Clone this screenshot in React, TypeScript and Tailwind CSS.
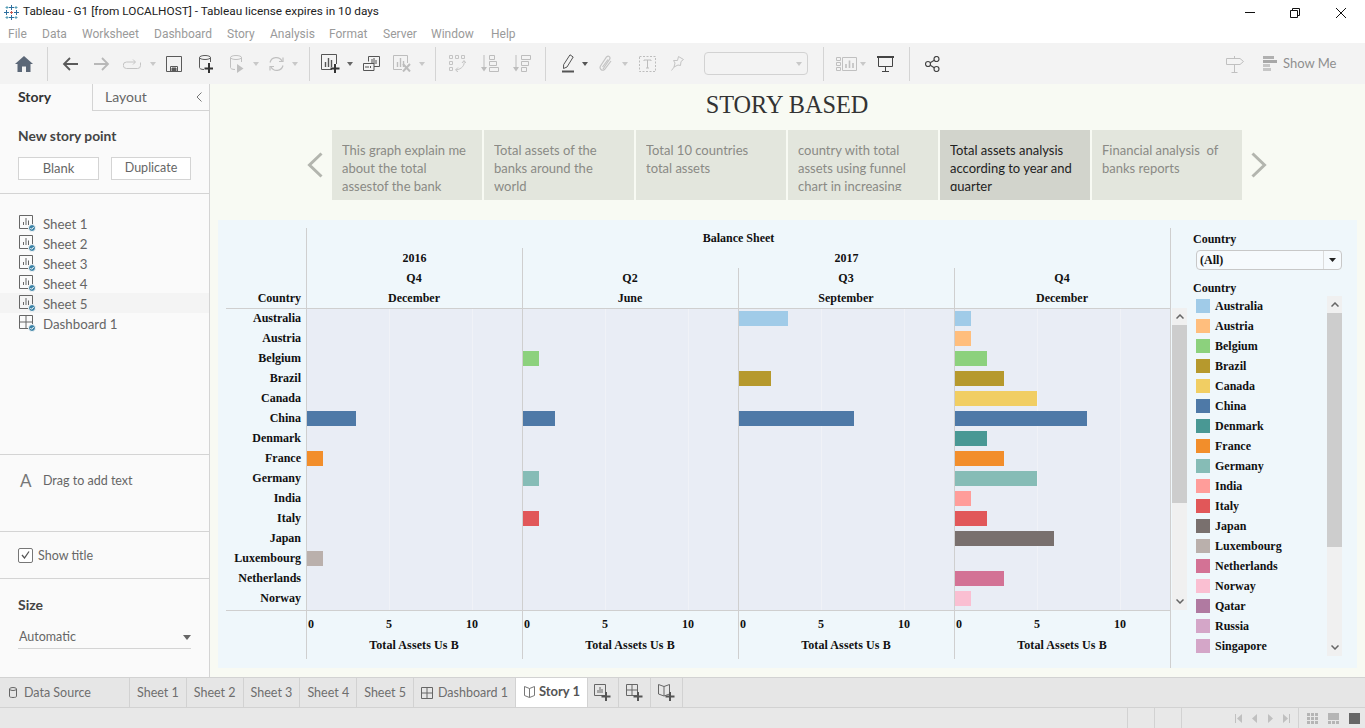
import React from "react";

const COLORS: Record<string, string> = {
  Australia: "#a0cbe8", Austria: "#ffbe7d", Belgium: "#8cd17d", Brazil: "#b6992d", Canada: "#f1ce63",
  China: "#4e79a7", Denmark: "#499894", France: "#f28e2b", Germany: "#86bcb6", India: "#ff9d9a",
  Italy: "#e15759", Japan: "#79706e", Luxembourg: "#bab0ac", Netherlands: "#d37295", Norway: "#fabfd2",
  Qatar: "#b07aa1", Russia: "#d4a6c8", Singapore: "#d4a6c8",
};
const ROWS = ["Australia","Austria","Belgium","Brazil","Canada","China","Denmark","France","Germany","India","Italy","Japan","Luxembourg","Netherlands","Norway"];
const LEGEND = [...ROWS, "Qatar", "Russia", "Singapore"];
const W: Record<number, number> = { 1: 16, 2: 32, 3: 49, 5: 82, 6: 99, 7: 115, 8: 132 };
const PANELS: Record<string, number>[] = [
  { China: 3, France: 1, Luxembourg: 1 },
  { Belgium: 1, China: 2, Germany: 1, Italy: 1 },
  { Australia: 3, Brazil: 2, China: 7 },
  { Australia: 1, Austria: 1, Belgium: 2, Brazil: 3, Canada: 5, China: 8, Denmark: 2, France: 3, Germany: 5, India: 1, Italy: 2, Japan: 6, Netherlands: 3, Norway: 1 },
];
const CARDS = [
  ["This graph explain me", "about the total", "assestof the bank"],
  ["Total assets of the", "banks around the", "world"],
  ["Total 10 countries", "total assets"],
  ["country with total", "assets using funnel", "chart in increasing"],
  ["Total assets analysis", "according to year and", "quarter"],
  ["Financial analysis  of", "banks reports"],
];

const Caret = ({ c, fill = "#a8a8a8" }: { c: string; fill?: string }) => (
  <svg className={c} width="6" height="4" viewBox="0 0 6 4"><path d="M0 0H6L3 4Z" fill={fill} /></svg>
);
const Sep = ({ c }: { c: string }) => <div className={`h-[34px] w-px shrink-0 bg-[#d4d4d4] ${c}`} />;

const Toolbar = () => (
  <div className="flex h-[41px] shrink-0 items-center bg-[#f3f3f3]">
    <svg className="ml-[15px] shrink-0" width="18" height="16" viewBox="0 0 18 16"><path d="M9 0L18 8H15.5V16H11V10.5H7V16H2.5V8H0Z" fill="#5b6777" /></svg>
    <Sep c="ml-[14px]" />
    <svg className="ml-[14px] shrink-0" width="16" height="14" viewBox="0 0 16 14" fill="none" stroke="#5a5a5a" strokeWidth="1.8"><path d="M16 7H2M8 1L2 7L8 13" /></svg>
    <svg className="ml-[16px] shrink-0" width="16" height="14" viewBox="0 0 16 14" fill="none" stroke="#b8b8b8" strokeWidth="1.8"><path d="M0 7H14M8 1L14 7L8 13" /></svg>
    <svg className="ml-[13px] shrink-0" width="18" height="10" viewBox="0 0 18 10" fill="none" stroke="#c4c4c4" strokeWidth="1"><path d="M12 3H3.5a3 3 0 0 0 0 6.5H14.5a3 3 0 0 0 3-3V3.5M10 .5L12.5 3L10 5.5" /></svg>
    <Caret c="ml-[9px] shrink-0" fill="#c8c8c8" />
    <svg className="ml-[10px] shrink-0" width="16" height="16" viewBox="0 0 16 16" fill="none" stroke="#5a5a5a"><path d="M.5.5H15.5V15.5H.5Z" /><path d="M4.5 15V10.5H11.5V15" /><path d="M6 12H10V15H6Z" fill="#5a5a5a" /></svg>
    <svg className="ml-[17px] shrink-0" width="14" height="18" viewBox="0 0 14 18" fill="none" stroke="#5a5a5a"><ellipse cx="6" cy="2.5" rx="5.5" ry="2" /><path d="M.5 2.5V12.5C.5 13.5 2 14.5 5 14.5M11.5 2.5V7" /><path d="M10 8V18M5.5 13.5H14.5" stroke="#333" strokeWidth="2" /></svg>
    <svg className="ml-[17px] shrink-0" width="14" height="18" viewBox="0 0 14 18" fill="none" stroke="#c0c0c0"><ellipse cx="6" cy="2.5" rx="5.5" ry="2" /><path d="M.5 2.5V12.5C.5 13.5 2 14.5 5 14.5M11.5 2.5V7" /><path d="M7 9L13.5 13.5L7 18Z" fill="#c0c0c0" stroke="none" /></svg>
    <Caret c="ml-[9px] shrink-0" fill="#c8c8c8" />
    <svg className="ml-[9px] shrink-0" width="17" height="16" viewBox="0 0 17 16" fill="none" stroke="#c0c0c0" strokeWidth="1.2"><path d="M2 6.5A6.5 6.5 0 0 1 14 5M15 9.5A6.5 6.5 0 0 1 3 11" /><path d="M11 5.5H15V1.5M6 10.5H2V14.5" /></svg>
    <Caret c="ml-[7px] shrink-0" fill="#c8c8c8" />
    <Sep c="ml-[11px]" />
    <svg className="ml-[11px] shrink-0" width="19" height="19" viewBox="0 0 19 19" fill="none" stroke="#555"><path d="M11 15.5H.5V.5H15.5V10" /><path d="M4.5 13V8M7.5 13V4M10.5 13V6" strokeWidth="1.4" /><path d="M14 10V19M9.5 14.5H18.5" stroke="#333" strokeWidth="2" /></svg>
    <Caret c="ml-[7px] shrink-0" fill="#666" />
    <svg className="ml-[10px] shrink-0" width="17" height="15" viewBox="0 0 17 15" fill="none" stroke="#555"><path d="M5.5 5.5V.5H16.5V10.5H11" /><path d="M.5 7.5H11V14.5H.5Z" fill="#f3f3f3" /><path d="M9 8V3M11 8V2M13 8V4M3 12V10M5 12V10M7.5 12V10" /></svg>
    <svg className="ml-[13px] shrink-0" width="18" height="17" viewBox="0 0 18 17" fill="none" stroke="#bdbdbd"><path d="M9 14.5H.5V.5H14.5V8" /><path d="M4.5 12V7M7.5 12V3M10.5 12V6" strokeWidth="1.4" /><path d="M10 9L17 16.5M17 9L10 16.5" strokeWidth="2" /></svg>
    <Caret c="ml-[8px] shrink-0" fill="#c8c8c8" />
    <Sep c="ml-[10px]" />
    <svg className="ml-[13px] shrink-0" width="17" height="17" viewBox="0 0 17 17" fill="none" stroke="#c4c4c4"><path d="M.5.5H3.5V3.5H.5ZM6.5.5H9.5V3.5H6.5ZM12.5.5H15.5V3.5H12.5ZM.5 6.5H3.5V9.5H.5ZM.5 12.5H3.5V15.5H.5Z" /><path d="M15 6C16 10 13 14 7 15M9 12.5L6.5 15L9 17M13 8L15 5.500L17 8" /></svg>
    <svg className="ml-[15px] shrink-0" width="18" height="17" viewBox="0 0 18 17" fill="none" stroke="#bdbdbd"><path d="M3 0V14" /><path d="M0 12H6L3 16.500Z" fill="#bdbdbd" stroke="none" /><path d="M8.500.5H13.500V4.500H8.500ZM8.500 6.500H15.500V10.500H8.500ZM8.500 12.500H17.500V16.500H8.500Z" /></svg>
    <svg className="ml-[14px] shrink-0" width="18" height="17" viewBox="0 0 18 17" fill="none" stroke="#bdbdbd"><path d="M3 0V14" /><path d="M0 12H6L3 16.500Z" fill="#bdbdbd" stroke="none" /><path d="M8.500.5H17.500V4.500H8.500ZM8.500 6.500H15.500V10.500H8.500ZM8.500 12.500H13.500V16.500H8.500Z" /></svg>
    <Sep c="ml-[14px]" />
    <svg className="ml-[16px] shrink-0" width="12" height="19" viewBox="0 0 12 19" fill="none" stroke="#555"><path d="M8 .8L11.200 3L5 13L1.500 14.500L1.600 10.700Z" /><path d="M0 17.500H12" strokeWidth="2" /></svg>
    <Caret c="ml-[8px] shrink-0" fill="#555" />
    <svg className="ml-[11px] shrink-0" width="13" height="17" viewBox="0 0 13 17" fill="none" stroke="#c4c4c4" strokeWidth="1.200"><path d="M4 14L10.500 4.500C12 2 9.500 .2 7.500 2L1.500 11C0 13.500 3 16.500 5.500 14.500L12 6M3.500 12L9 4.500" /></svg>
    <Caret c="ml-[10px] shrink-0" fill="#c8c8c8" />
    <svg className="ml-[11px] shrink-0" width="17" height="16" viewBox="0 0 17 16" fill="none" stroke="#bdbdbd"><path d="M.5.5H16.500V15.500H.5Z" strokeDasharray="2 1.500" /><path d="M5 5V4H12V5M8.500 4V12M7 12H10" /></svg>
    <svg className="ml-[15px] shrink-0" width="13" height="15" viewBox="0 0 13 15" fill="none" stroke="#c4c4c4"><path d="M7.500.5L12.500 3.500L10 5.500L9.500 9.500L7 9L3 11L4 7L2.500 4.500L6.500 4.500ZM3.500 10.500L.5 14.500" /></svg>
    <div className="ml-[20px] flex h-[23px] w-[104px] shrink-0 items-center justify-end rounded-sm border border-[#d2d2d2] bg-[#f3f3f3] pr-[5px]">
      <Caret c="" fill="#c8c8c8" />
    </div>
    <Sep c="ml-[15px]" />
    <svg className="ml-[12px] shrink-0" width="21" height="14" viewBox="0 0 21 14" fill="none" stroke="#c0c0c0"><path d="M.5.5H4.500V3.500H.5ZM.5 5.500H4.500V8.500H.5ZM.5 10.500H4.500V13.500H.5ZM6.500.5H20.500V13.500H6.500Z" /><path d="M10 11V7M13.500 11V3.500M17 11V6" strokeWidth="1.600" /></svg>
    <Caret c="ml-[3px] shrink-0" fill="#c8c8c8" />
    <svg className="ml-[11px] shrink-0" width="17" height="16" viewBox="0 0 17 16" fill="none" stroke="#444"><path d="M0 1H17" strokeWidth="2" /><path d="M1.500 2V10.500H15.500V2M8.500 10.500V15.500M5 15.500H12" /></svg>
    <Sep c="ml-[15px]" />
    <svg className="ml-[15px] shrink-0" width="15" height="16" viewBox="0 0 15 16" fill="none" stroke="#444" strokeWidth="1.200"><circle cx="3" cy="8" r="2.500" /><circle cx="11.500" cy="3" r="2.500" /><circle cx="11.500" cy="13" r="2.500" /><path d="M5.200 6.700L9.300 4.300M5.200 9.300L9.300 11.700" /></svg>
    <svg className="ml-auto shrink-0" width="18" height="18" viewBox="0 0 18 18" fill="none" stroke="#c0c0c0"><path d="M.5 3.500H14L17.500 6.500L14 9.500H.5ZM8.500 1V3M8.500 10V17M5.500 17.500H11.500" /></svg>
    <svg className="ml-[19px] shrink-0" width="14" height="15" viewBox="0 0 14 15"><path d="M0 0H11V3H0Z" fill="#b0b0b0" /><path d="M0 4H14V7H0Z" fill="#a8a8a8" /><path d="M0 8H7V11H0ZM0 12H8V15H0Z" fill="#c6c6c6" /></svg>
    <span className="ml-[6px] w-[54px] mr-[28px] whitespace-nowrap text-[13px] text-[#8f8f8f]">Show Me</span>
  </div>
);

const Logo = () => (
  <svg className="ml-[3px] shrink-0" width="17" height="17" viewBox="0 0 17 17" fill="none" strokeWidth="1">
    <path d="M8.500 1V6M6 3.500H11M8.500 11V16M6 13.500H11M1 8.500H6M3.500 6V11M11 8.500H16M13.500 6V11" stroke="#2f6f9f" />
    <path d="M4 2V5M2.500 3.500H5.500M13 2V5M11.500 3.500H14.500M4 12V15M2.500 13.500H5.500M13 12V15M11.500 13.500H14.500" stroke="#58a0b8" />
    <path d="M8.500 7V10M7 8.500H10" stroke="#c85a50" />
  </svg>
);

const SheetIcon = ({ dash }: { dash?: boolean }) => (
  <svg width="17" height="17" viewBox="0 0 17 17" fill="none" stroke="#666" className="shrink-0">
    {dash ? (
      <path d="M.5.5H13.500V13.500H.5ZM.5 7H13.500M7 .5V13.500" />
    ) : (
      <>
        <path d="M.5 .5H13.500V13.500H.5Z" />
        <path d="M4.500 10V7M7 10V3M9.500 10V5.500" />
      </>
    )}
    <circle cx="13" cy="13" r="3.500" fill="#3b82a6" stroke="#fafafa" />
    <path d="M11.300 13L12.600 14.300L14.800 11.900" stroke="#fff" strokeWidth="1" />
  </svg>
);

const Sidebar = () => (
  <aside className="flex w-[210px] shrink-0 flex-col border-r border-[#d4d4d4] bg-[#fafafa] text-[12.5px] text-[#666]">
    <div className="flex h-[27px] shrink-0">
      <div className="flex w-[92px] items-center pb-[2px] pl-[18px] text-[14px] font-bold text-[#333]">Story</div>
      <div className="flex flex-1 items-center justify-between border-b border-l border-[#d4d4d4] pb-[1px] pl-[12px] pr-[7px] text-[14px] text-[#666]">
        <span>Layout</span>
        <svg width="6" height="10" viewBox="0 0 6 10" fill="none" stroke="#777"><path d="M5.500.5L1 5L5.500 9.500" /></svg>
      </div>
    </div>
    <div className="h-[83px] shrink-0 border-b border-[#d4d4d4] pl-[18px]">
      <div className="mt-[16px] text-[13.8px] font-bold leading-[18px] text-[#444]">New story point</div>
      <div className="mt-[12px] flex gap-[12px] text-[13px]">
        <div className="flex h-[23px] w-[81px] items-center justify-center border border-[#d4d4d4] bg-white">Blank</div>
        <div className="flex h-[23px] w-[80px] items-center justify-center border border-[#d4d4d4] bg-white text-[12.5px]">Duplicate</div>
      </div>
    </div>
    <div className="h-[261px] shrink-0 border-b border-[#d4d4d4] pt-[19px]">
      {["Sheet 1", "Sheet 2", "Sheet 3", "Sheet 4", "Sheet 5", "Dashboard 1"].map((s, i) => (
        <div key={s} className={`flex h-[20px] items-center gap-[7px] pl-[19px] text-[13.3px] ${i === 4 ? "bg-[#f4f4f4]" : ""}`}>
          <SheetIcon dash={i === 5} />
          <span className="pt-[4px]">{s}</span>
        </div>
      ))}
    </div>
    <div className="flex h-[77px] shrink-0 items-start gap-[12px] border-b border-[#d4d4d4] pl-[20px] pt-[17px]">
      <span className="w-[11px] text-[17px] leading-[18px] text-[#777]">A</span>
      <span className="leading-[18px]">Drag to add text</span>
    </div>
    <div className="flex h-[47px] shrink-0 items-center gap-[5px] border-b border-[#d4d4d4] pl-[18px]">
      <div className="flex h-[15px] w-[15px] items-center justify-center rounded-[2px] border border-[#777] bg-white">
        <svg width="9" height="8" viewBox="0 0 9 8" fill="none" stroke="#555" strokeWidth="1.300"><path d="M1 4L3.500 7L8 .5" /></svg>
      </div>
      <span className="pt-[2px]">Show title</span>
    </div>
    <div className="flex-1 px-[18px]">
      <div className="mt-[17px] text-[14px] font-bold leading-[18px] text-[#444]">Size</div>
      <div className="mt-[12px] flex h-[23px] items-center justify-between border-b border-[#d4d4d4] pl-[1px]">
        <span>Automatic</span>
        <svg width="8" height="5" viewBox="0 0 8 5"><path d="M0 0H8L4 5Z" fill="#666" /></svg>
      </div>
    </div>
  </aside>
);

const Vscroll = ({ c, thumb, btn }: { c: string; thumb: string; btn: string }) => (
  <div className={`flex w-[15px] shrink-0 flex-col bg-[#f0f0f0] ${c}`}>
    <div className={`flex items-center justify-center ${btn}`}>
      <svg width="8" height="5" viewBox="0 0 8 5" fill="none" stroke="#666" strokeWidth="1.500"><path d="M.5 4.500L4 1L7.500 4.500" /></svg>
    </div>
    <div className={`bg-[#cdcdcd] ${thumb}`} />
    <div className="flex flex-1 items-end justify-center pb-[6px]">
      <svg width="8" height="5" viewBox="0 0 8 5" fill="none" stroke="#666" strokeWidth="1.500"><path d="M.5.5L4 4L7.500 .5" /></svg>
    </div>
  </div>
);

const Chart = () => (
  <div className="flex w-[945px] shrink-0 flex-col border-r border-[#cfcfcf]">
    <div className="grid h-[81px] grid-cols-[80px_repeat(4,216px)] grid-rows-[repeat(4,20px)] border-b border-[#cfcfcf] text-center">
      <div className="col-start-2 col-span-4 flex items-center justify-center border-l border-[#cfcfcf]">Balance Sheet</div>
      <div className="row-start-2 col-start-2 flex items-center justify-center border-l border-[#cfcfcf]">2016</div>
      <div className="row-start-2 col-start-3 col-span-3 flex items-center justify-center border-l border-[#cfcfcf]">2017</div>
      <div className="row-start-3 col-start-1" />
      {["Q4", "Q2", "Q3", "Q4"].map((q, i) => (
        <div key={i} className="row-start-3 flex items-center justify-center border-l border-[#cfcfcf] pr-px">{q}</div>
      ))}
      <div className="row-start-4 flex items-center justify-end pr-[5px]">Country</div>
      {["December", "June", "September", "December"].map((m, i) => (
        <div key={i} className="row-start-4 flex items-center justify-center border-l border-[#cfcfcf] pr-px">{m}</div>
      ))}
    </div>
    <div className="grid h-[302px] grid-cols-[80px_repeat(4,216px)] border-b border-[#cfcfcf]">
      <div>
        {ROWS.map((r) => (
          <div key={r} className="flex h-[20px] items-center justify-end pb-[2px] pr-[5px]">{r}</div>
        ))}
      </div>
      {PANELS.map((p, i) => (
        <div key={i} className="relative border-l border-[#cfcfcf] bg-[#e9edf5]">
          <div className="absolute bottom-0 left-[82px] top-0 w-px bg-[#f0f2f7]" />
          <div className="absolute bottom-0 left-[165px] top-0 w-px bg-[#f0f2f7]" />
          {ROWS.map((r) => (
            <div key={r} className="relative h-[20px] pt-[2px]">
              {p[r] ? <div className="h-[15px]" style={{ width: W[p[r]], backgroundColor: COLORS[r] }} /> : null}
            </div>
          ))}
        </div>
      ))}
    </div>
    <div className="grid h-[48px] grid-cols-[80px_repeat(4,216px)] text-center">
      <div />
      {PANELS.map((_, i) => (
        <div key={i} className="flex flex-col border-l border-[#cfcfcf]">
          <div className="mt-[3px] flex h-[20px] items-center">
            <span className="ml-px w-[6px]">0</span>
            <span className="ml-[2px] w-[146px]">5</span>
            <span className="w-[20px]">10</span>
          </div>
          <div className="mt-[1px] flex h-[20px] items-center justify-center pr-px tracking-[0.1px]">Total Assets Us B</div>
        </div>
      ))}
    </div>
  </div>
);

const FilterCol = () => (
  <div className="ml-[6px] flex w-[149px] shrink-0 flex-col">
    <div className="flex h-[22px] items-center">Country</div>
    <div className="ml-[3px] flex h-[20px] w-[146px] items-center rounded-sm border border-[#c8c8c8] bg-[#f6fafd] pl-[3px]">
      <span className="flex-1">(All)</span>
      <div className="flex h-full w-[18px] items-center justify-center border-l border-[#dcdcdc]">
        <svg width="7" height="4" viewBox="0 0 7 4"><path d="M0 0H7L3.500 4Z" fill="#222" /></svg>
      </div>
    </div>
    <div className="mt-[9px] flex h-[17px] items-center">Country</div>
    <div className="flex h-[360px]">
      <div className="ml-[3px] w-[131px]">
        {LEGEND.map((l) => (
          <div key={l} className="flex h-[20px] items-center gap-[5px]">
            <div className="h-[14px] w-[14px]" style={{ backgroundColor: COLORS[l] }} />
            <span>{l}</span>
          </div>
        ))}
      </div>
      <Vscroll c="" btn="h-[17px]" thumb="h-[234px]" />
    </div>
  </div>
);

const Main = () => (
  <main className="flex min-w-0 flex-1 flex-col bg-[#f8faf3]">
    <div className="flex h-[46px] shrink-0 items-center justify-center pb-[4px] pr-px font-['Liberation_Serif',serif] text-[24.3px] text-[#333]">STORY BASED</div>
    <div className="flex h-[70px] shrink-0 items-center justify-center pr-px">
      <svg className="mr-[9px] shrink-0" width="16" height="26" viewBox="0 0 16 26" fill="none" stroke="#b3b5ae" strokeWidth="3"><path d="M14.500 1.500L2.500 13L14.500 24.500" /></svg>
      <div className="flex gap-[2px]">
        {CARDS.map((lines, i) => (
          <div key={i} className={`h-[70px] w-[150px] px-[10px] pt-[11px] text-[13px] leading-[18px] ${i === 4 ? "bg-[#d2d4cc] text-[#222]" : "bg-[#e3e6dd] text-[#8a8a85]"}`}>
            <div className="h-[50px] overflow-hidden">
              {lines.map((l) => (
                <div key={l} className="whitespace-pre">{l}</div>
              ))}
            </div>
          </div>
        ))}
      </div>
      <svg className="ml-[9px] shrink-0" width="16" height="26" viewBox="0 0 16 26" fill="none" stroke="#b3b5ae" strokeWidth="3"><path d="M1.500 1.500L13.500 13L1.500 24.500" /></svg>
    </div>
    <div className="mx-[8px] mt-[20px] flex h-[448px] shrink-0 bg-[#eff7fb] pl-[8px] pt-[8px] font-['Liberation_Serif',serif] text-[12px] font-bold text-[#111]">
      <Chart />
      <Vscroll c="ml-px mt-[80px] h-[302px]" btn="h-[17px]" thumb="h-[178px]" />
      <FilterCol />
    </div>
  </main>
);

const TabIcon = ({ children }: { children: React.ReactNode }) => (
  <svg width="17" height="17" viewBox="0 0 17 17" fill="none" stroke="#666" className="shrink-0">{children}</svg>
);

const Tabs = () => (
  <div className="flex h-[31px] shrink-0 border-y border-[#d2d2d2] bg-[#e6e6e6] text-[12.5px] text-[#6e6e6e]">
    <div className="flex w-[130px] items-center border-r border-[#d2d2d2] pl-[9px]">
      <svg width="8" height="11" viewBox="0 0 8 11" fill="none" stroke="#666"><ellipse cx="4" cy="2" rx="3.500" ry="1.500" /><path d="M.5 2V9.500C.5 10 2 10.500 4 10.500S7.500 10 7.500 9.500V2" /></svg>
      <span className="ml-[7px] pt-[2px]">Data Source</span>
    </div>
    {["Sheet 1", "Sheet 2", "Sheet 3", "Sheet 4", "Sheet 5"].map((s) => (
      <div key={s} className="flex w-[56.8px] items-center justify-center border-r border-[#d2d2d2] pt-[2px]">{s}</div>
    ))}
    <div className="flex w-[102px] items-center justify-center gap-[5px] border-r border-[#d2d2d2]">
      <svg width="12" height="12" viewBox="0 0 12 12" fill="none" stroke="#666"><path d="M.5.5H11.500V11.500H.5ZM6 .5V11.500M.5 6H11.500" /></svg>
      <span className="pt-[2px]">Dashboard 1</span>
    </div>
    <div className="flex w-[71px] items-center justify-center gap-[4px] bg-white pb-px pl-px text-[13px] font-bold text-[#555]">
      <svg width="11" height="12" viewBox="0 0 11 12" fill="none" stroke="#777"><path d="M5.500 2.500L.5.5V9.500L5.500 11.500L10.500 9.500V.5ZM5.500 2.500V11.500" /></svg>
      <span>Story 1</span>
    </div>
    <div className="flex w-[32px] items-center justify-center border-x border-[#d2d2d2]">
      <TabIcon><path d="M11 11.500H.5V.5H11.500V8M4 9V6M6 9V3M8 9V5" /><path d="M12 8V17M7.500 12.500H16.500" stroke="#555" strokeWidth="2" /></TabIcon>
    </div>
    <div className="flex w-[32px] items-center justify-center border-r border-[#d2d2d2]">
      <TabIcon><path d="M11 11.500H.5V.5H11.500V8M6 .5V11.500M.5 6H11.500" /><path d="M12 8V17M7.500 12.500H16.500" stroke="#555" strokeWidth="2" /></TabIcon>
    </div>
    <div className="flex w-[32px] items-center justify-center border-r border-[#d2d2d2]">
      <TabIcon><path d="M6 2.500L.5.5V10L6 12L11.500 10V.5ZM6 2.500V12" /><path d="M12 8V17M7.500 12.500H16.500" stroke="#555" strokeWidth="2" /></TabIcon>
    </div>
  </div>
);

const Status = () => (
  <div className="flex h-[20px] shrink-0 items-center justify-end bg-[#e8e8e8] text-[#bbb]">
    <div className="h-full w-[27px] border-l border-[#d2d2d2]" />
    <div className="h-full w-[27px] border-l border-[#d2d2d2]" />
    <div className="flex h-full w-[117px] items-center justify-end border-l border-[#d2d2d2] pr-[8px]">
      <svg width="55" height="9" viewBox="0 0 55 9" fill="#c0c0c0">
        <path d="M0 0H1V9H0ZM7 0V9L2 4.500ZM22 0V9L17 4.500ZM33 0L38 4.500L33 9ZM48 0L53 4.500L48 9ZM54 0H55V9H54Z" />
      </svg>
    </div>
    <div className="flex h-full w-[67px] items-center gap-[10px] border-l border-[#d2d2d2] pl-[8px]">
      <svg className="shrink-0" width="11" height="11" viewBox="0 0 11 11" fill="#b5b5b5"><path d="M0 0H3V3H0ZM4 0H7V3H4ZM8 0H11V3H8ZM0 4H3V7H0ZM4 4H7V7H4ZM8 4H11V7H8ZM0 8H3V11H0ZM4 8H7V11H4ZM8 8H11V11H8Z" /></svg>
      <svg className="shrink-0" width="11" height="11" viewBox="0 0 11 11" fill="#b5b5b5"><path d="M0 0H11V7H0ZM0 8H3V11H0ZM4 8H7V11H4ZM8 8H11V11H8Z" /></svg>
      <div className="h-[11px] w-[11px] shrink-0 bg-[#666]" />
    </div>
  </div>
);

const MENU = [
  ["File", "w-[34px]"], ["Data", "w-[40px]"], ["Worksheet", "w-[72px]"], ["Dashboard", "w-[73px]"], ["Story", "w-[43px]"],
  ["Analysis", "w-[59px]"], ["Format", "w-[54px]"], ["Server", "w-[48px]"], ["Window", "w-[60px]"], ["Help", "w-[40px]"],
];

export default function App() {
  return (
    <div className="flex h-[728px] w-[1365px] flex-col overflow-hidden bg-white font-['Lato',sans-serif]">
      <div className="flex h-[25px] shrink-0 items-center">
        <Logo />
        <span className="ml-[3px] pb-[2px] font-['Roboto',sans-serif] text-[11.8px] text-[#222]">Tableau - G1 [from LOCALHOST] - Tableau license expires in 10 days</span>
        <svg className="ml-auto mr-[35px]" width="10" height="1" viewBox="0 0 10 1"><path d="M0 0H10V1H0Z" fill="#111" /></svg>
        <svg className="mr-[36px]" width="10" height="10" viewBox="0 0 10 10" fill="none" stroke="#111"><path d="M.5 2.500H7.500V9.500H.5ZM2.500 2.500V.5H9.500V7.500H7.500" /></svg>
        <svg className="mr-[19px]" width="10" height="10" viewBox="0 0 10 10" fill="none" stroke="#111"><path d="M0 0L10 10M10 0L0 10" /></svg>
      </div>
      <div className="flex h-[18px] shrink-0 items-center pl-[8px] font-['Roboto',sans-serif] text-[12px] text-[#9a9a9a]">
        {MENU.map(([m, w]) => (
          <span key={m} className={w}>{m}</span>
        ))}
      </div>
      <Toolbar />
      <div className="flex min-h-0 flex-1">
        <Sidebar />
        <Main />
      </div>
      <Tabs />
      <Status />
    </div>
  );
}
